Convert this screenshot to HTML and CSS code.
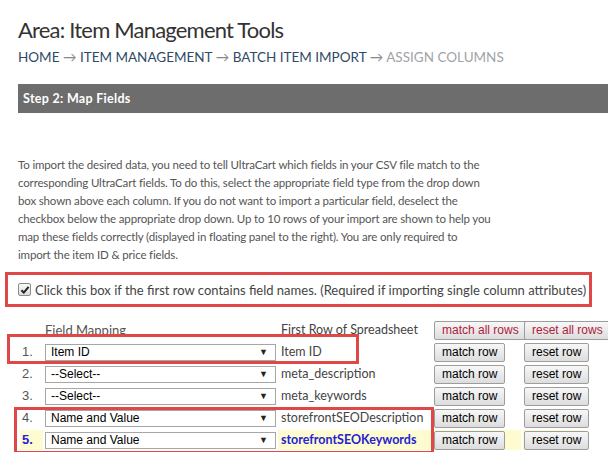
FILE: index.html
```html
<!DOCTYPE html>
<html lang="en">
<head>
  <meta charset="UTF-8" />
  <title>Assign Columns</title>
  <link rel="stylesheet" href="styles.css">
</head>
<body>
  <div class="page">
    <h1 class="area-title">Area: Item Management Tools</h1>
    <div class="crumbs">
      <a href="#">HOME</a> <span class="arr">&rarr;</span>
      <a href="#">ITEM MANAGEMENT</a> <span class="arr">&rarr;</span>
      <a href="#">BATCH ITEM IMPORT</a> <span class="arr">&rarr;</span>
      <span class="current">ASSIGN COLUMNS</span>
    </div>

    <div class="step-bar">Step 2: Map Fields</div>

    <p class="intro">
      To import the desired data, you need to tell UltraCart which fields in your CSV file match to the<br>
      corresponding UltraCart fields. To do this, select the appropriate field type from the drop down<br>
      box shown above each column. If you do not want to import a particular field, deselect the<br>
      checkbox below the appropriate drop down. Up to 10 rows of your import are shown to help you<br>
      map these fields correctly (displayed in floating panel to the right). You are only required to<br>
      import the item ID &amp; price fields.
    </p>

    <div class="first-row-opt">
      <span class="cb"><svg width="10" height="10" viewBox="0 0 10 10"><path d="M1.5 5.2 L3.8 7.6 L8.6 1.8" fill="none" stroke="#222" stroke-width="2"/></svg></span>
      <span>Click this box if the first row contains field names. (Required if importing single column attributes)</span>
    </div>

    <div class="map-wrap">
      <table class="map-table">
        <colgroup>
          <col class="c-num"><col class="c-sel"><col class="c-val"><col class="c-btn1"><col class="c-btn2">
        </colgroup>
        <tr class="head-row">
          <td></td>
          <td class="th">Field Mapping</td>
          <td class="th val">First Row of Spreadsheet</td>
          <td><button class="btn btn-all">match all rows</button></td>
          <td><button class="btn btn-all">reset all rows</button></td>
        </tr>
        <tr>
          <td class="num">1.</td>
          <td><span class="sel">Item ID</span></td>
          <td class="val">Item ID</td>
          <td><button class="btn">match row</button></td>
          <td><button class="btn">reset row</button></td>
        </tr>
        <tr>
          <td class="num">2.</td>
          <td><span class="sel">--Select--</span></td>
          <td class="val">meta_description</td>
          <td><button class="btn">match row</button></td>
          <td><button class="btn">reset row</button></td>
        </tr>
        <tr>
          <td class="num">3.</td>
          <td><span class="sel">--Select--</span></td>
          <td class="val">meta_keywords</td>
          <td><button class="btn">match row</button></td>
          <td><button class="btn">reset row</button></td>
        </tr>
        <tr>
          <td class="num">4.</td>
          <td><span class="sel">Name and Value</span></td>
          <td class="val">storefrontSEODescription</td>
          <td><button class="btn">match row</button></td>
          <td><button class="btn">reset row</button></td>
        </tr>
        <tr class="active">
          <td class="num">5.</td>
          <td><span class="sel">Name and Value</span></td>
          <td class="val">storefrontSEOKeywords</td>
          <td><button class="btn">match row</button></td>
          <td><button class="btn">reset row</button></td>
        </tr>
      </table>
      <!-- annotation boxes -->
      <div class="mark mark-row1"></div>
      <div class="mark mark-row45"></div>
    </div>
  </div>
</body>
</html>
```

FILE: styles.css
```css
body {
  margin: 0;
  background: #fff;
  font-family: Lato, "Open Sans", sans-serif;
  color: #555;
}
.page {
  padding-left: 18px;
}

/* Title + breadcrumbs */
.area-title {
  margin: 16px 0 0;
  font-family: Lato, sans-serif;
  font-weight: 400;
  font-size: 22px;
  letter-spacing: -0.8px;
  color: #333;
}
.crumbs {
  margin-top: 6px;
  font-size: 13.5px;
  color: #2f4a66;
}
.crumbs a {
  color: #2f4a66;
  text-decoration: none;
}
.crumbs .arr {
  color: #888;
}
.crumbs .current {
  color: #a0a3a8;
}

/* Step bar */
.step-bar {
  margin-top: 19px;
  height: 29px;
  line-height: 29px;
  background: #6d6d6d;
  color: #fff;
  font-weight: 700;
  font-size: 12.5px;
  letter-spacing: 0.3px;
  padding-left: 5px;
}

.intro {
  margin: 43px 0 0;
  font-size: 11.5px;
  letter-spacing: -0.15px;
  line-height: 18px;
  color: #555;
}

/* First row checkbox option */
.first-row-opt {
  margin: 8px 16px 0 -13px;
  height: 29px;
  border: 3px solid #e04848;
  padding-left: 10px;
  display: flex;
  align-items: center;
  gap: 4px;
  font-size: 13px;
  color: #444;
}
.cb {
  width: 11px;
  height: 11px;
  border: 1px solid #8a8a8a;
  border-radius: 2px;
  background: linear-gradient(#fafafa, #dcdcdc);
  display: flex;
  align-items: center;
  justify-content: center;
}

/* Mapping table */
.map-wrap {
  position: relative;
  margin-top: 11px;
}
.map-table {
  table-layout: fixed;
  border-collapse: separate;
  border-spacing: 2px;
  width: 569px;
}
.c-num { width: 23px; }
.c-sel { width: 231px; }
.c-val { width: 153px; }
.c-btn1 { width: 88px; }
.c-btn2 { width: 62px; }
.map-table td {
  height: 20px;
  line-height: 16px;
  padding: 0;
  white-space: nowrap;
  vertical-align: middle;
}
.map-table .th {
  font-size: 13px;
  color: #555;
}
.map-table td.val {
  padding-left: 3px;
  font-size: 12.5px;
  color: #444;
}
.map-table td.num {
  padding-left: 2px;
  font-family: "Liberation Sans", Arial, sans-serif;
  font-size: 13px;
  color: #555;
}
.map-table td:nth-child(4),
.map-table td:nth-child(5) {
  padding-left: 1px;
}
.active td {
  background: #fffbd0;
}
.active td.num,
.active td.val {
  color: #2424d0;
  font-weight: 700;
}
.active td:nth-child(2) {
  background: transparent;
}

.sel {
  position: relative;
  display: block;
  box-sizing: border-box;
  width: 231px;
  height: 17px;
  line-height: 15px;
  border: 1px solid #a6a6a6;
  background: #fff;
  padding-left: 5px;
  font-family: "Liberation Sans", Arial, sans-serif;
  font-size: 12px;
  font-weight: 400;
  color: #000;
}
.sel::after {
  content: "\25BC";
  position: absolute;
  right: 7px;
  top: 0;
  font-size: 9px;
  color: #222;
}

.btn {
  display: block;
  box-sizing: border-box;
  height: 19px;
  line-height: 15px;
  padding: 0 7px;
  border: 1px solid #9d9d9d;
  border-radius: 2px;
  background: linear-gradient(#f7f7f7, #dddddd);
  font-family: "Liberation Sans", Arial, sans-serif;
  font-size: 12px;
  color: #000;
  white-space: nowrap;
}
.btn-all {
  color: #b0203e;
}

/* red annotation frames */
.mark {
  position: absolute;
  border: 3px solid #e04848;
  box-sizing: border-box;
}
.mark-row1 {
  left: -11px;
  top: 16px;
  width: 352px;
  height: 30px;
}
.mark-row45 {
  left: -4px;
  top: 89px;
  width: 420px;
  height: 47px;
}
```
